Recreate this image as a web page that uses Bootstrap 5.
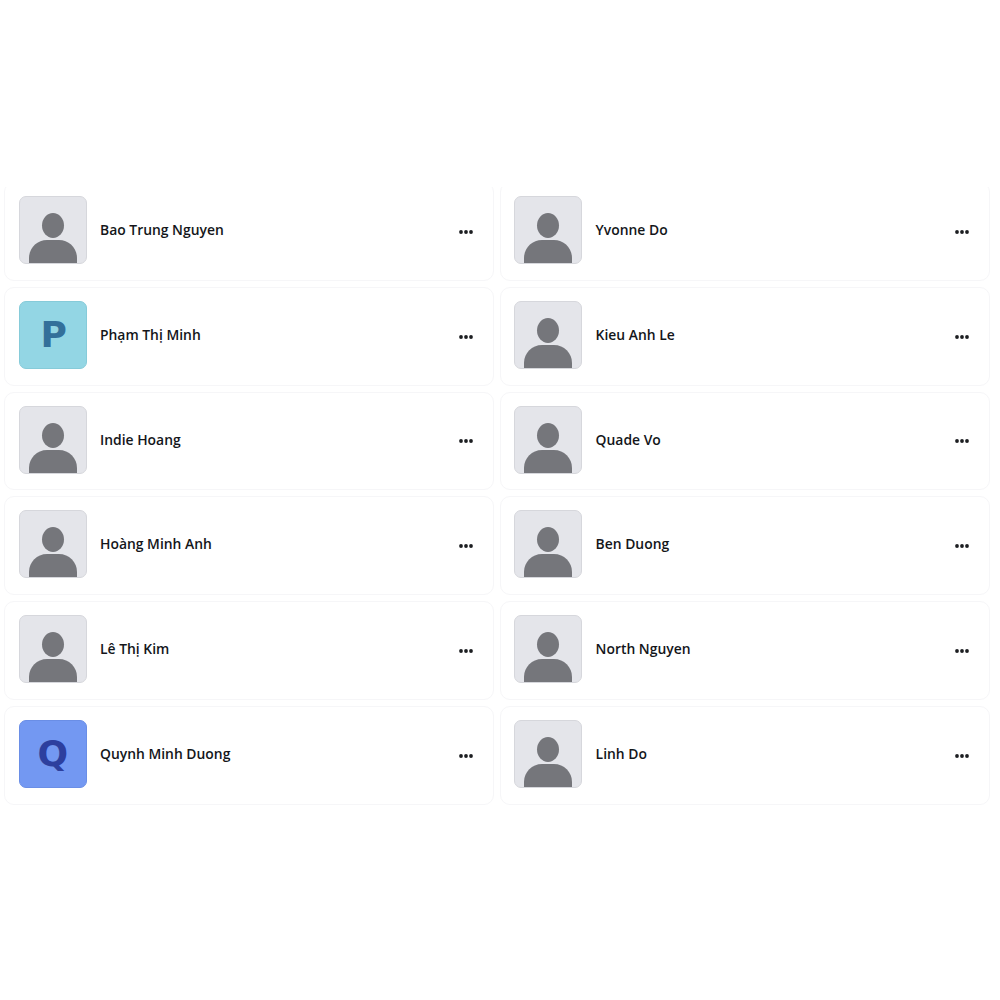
<!DOCTYPE html>
<html lang="en">
<head>
  <meta charset="UTF-8" />
  <meta name="viewport" content="width=device-width, initial-scale=1.0"/>
  <title>Members</title>
  <link href="https://cdn.jsdelivr.net/npm/bootstrap@5.3.0/dist/css/bootstrap.min.css" rel="stylesheet">
  <style>
    body {
      background: #fff;
      font-family: "Open Sans", "Noto Sans", sans-serif;
    }
    .member-clip {
      margin: 187px 10.4px 0 4.4px;
      overflow: hidden;
    }
    .member-grid {
      --bs-gutter-x: 6px;
      --bs-gutter-y: 6px;
      margin-top: -11px;
    }
    .member-card {
      height: 98.8px;
      padding: 13px 14px 16px 13.3px;
      background: #fff;
      border: 1px solid #f6f6f8;
      border-radius: 10px;
    }
    .member-avatar {
      width: 68px;
      height: 68px;
      flex-shrink: 0;
      border-radius: 7px;
      border: 1px solid #d6d7dc;
      background: #e4e5ea;
      overflow: hidden;
      font-family: "DejaVu Sans", sans-serif;
      font-size: 36px;
      font-weight: 700;
      line-height: 1;
    }
    .member-avatar svg { display: block; }
    .tile-p { background: #93d6e4; border-color: #86cbd9; color: #33709a; padding-left: 2px; }
    .tile-q { background: #7398f2; border-color: #6a8ee6; color: #2d3f9e; }
    .member-name {
      margin-left: 13.3px;
      padding-top: 1px;
      font-size: 13.9px;
      font-weight: 600;
      color: #14161a;
    }
    .member-more {
      margin-right: 6px;
      margin-top: 4px;
    }
  </style>
</head>
<body>
  <div class="member-clip">
    <div class="row member-grid" id="members"></div>
  </div>

  <script>
    const members = [
      ['Bao Trung Nguyen'], ['Yvonne Do'],
      ['Phạm Thị Minh', 'P'], ['Kieu Anh Le'],
      ['Indie Hoang'], ['Quade Vo'],
      ['Hoàng Minh Anh'], ['Ben Duong'],
      ['Lê Thị Kim'], ['North Nguyen'],
      ['Quynh Minh Duong', 'Q'], ['Linh Do']
    ];

    const silhouette = `<svg width="66" height="66" viewBox="1 1 66 66">
      <ellipse cx="34" cy="29.5" rx="11" ry="12.5" fill="#75767b"/>
      <path d="M10 67V62C10 52 18 44 28 44H40C50 44 58 52 58 62V67Z" fill="#75767b"/>
    </svg>`;

    const dots = `<svg width="14" height="4" viewBox="0 0 14 4" fill="#1c1e21">
      <circle cx="2" cy="2" r="1.9"/><circle cx="7" cy="2" r="1.9"/><circle cx="12" cy="2" r="1.9"/>
    </svg>`;

    document.getElementById('members').innerHTML = members.map(([name, letter]) => `
      <div class="col-6">
        <div class="member-card d-flex align-items-center">
          ${letter
            ? `<div class="member-avatar d-flex align-items-center justify-content-center tile-${letter.toLowerCase()}">${letter}</div>`
            : `<div class="member-avatar">${silhouette}</div>`}
          <span class="member-name flex-grow-1">${name}</span>
          <span class="member-more d-flex">${dots}</span>
        </div>
      </div>`).join('');
  </script>
  <script src="https://cdn.jsdelivr.net/npm/bootstrap@5.3.0/dist/js/bootstrap.bundle.min.js"></script>
</body>
</html>
